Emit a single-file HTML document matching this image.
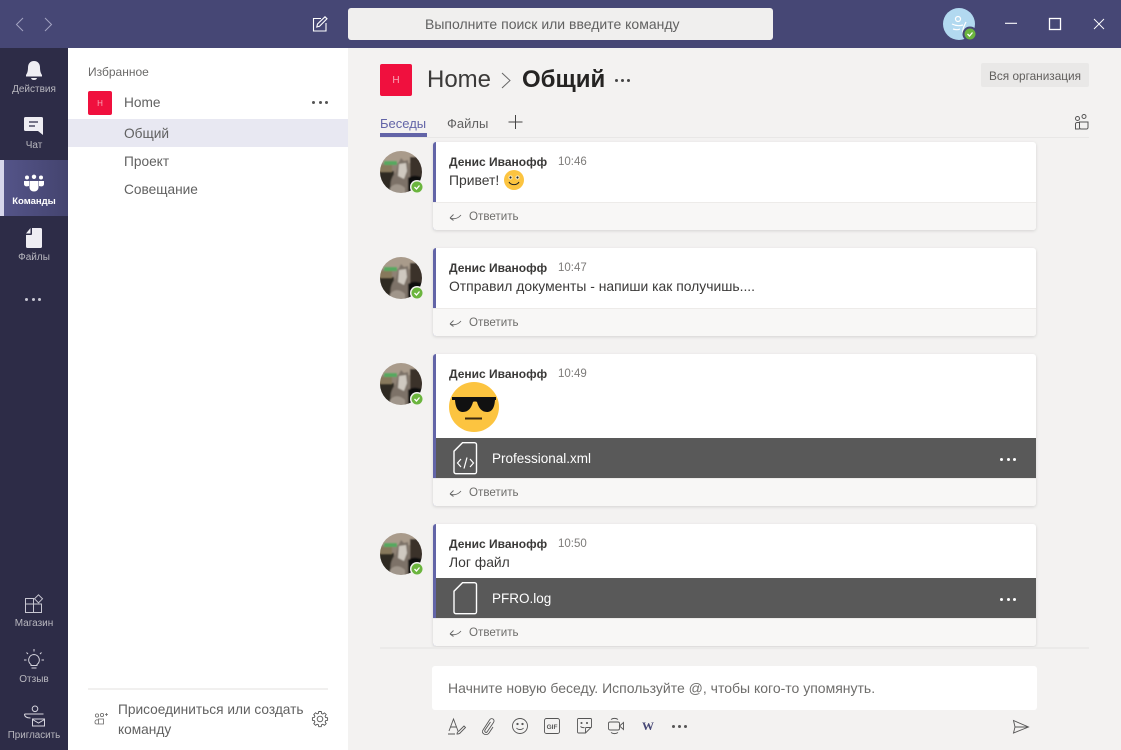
<!DOCTYPE html>
<html lang="ru"><head><meta charset="utf-8"><title>Teams</title>
<style>
*{box-sizing:border-box}
html,body{margin:0;padding:0}
body{width:1121px;height:750px;overflow:hidden;position:relative;background:#f3f2f1;font-family:"Liberation Sans","Noto Sans CJK SC",sans-serif;color:#252423}
.a{position:absolute;white-space:nowrap}
svg{position:absolute;display:block;overflow:visible}
#top{left:0;top:0;width:1121px;height:48px;background:#464775}
#rail{left:0;top:48px;width:68px;height:702px;background:#2d2c47}
#side{left:68px;top:48px;width:280px;height:702px;background:#fff}
.rl{width:68px;left:0;text-align:center;font-size:10px;color:#b9b8bf;line-height:12px}
.ch{left:124px;font-size:13.7px;color:#616161;line-height:16px}
.card{position:absolute;left:433px;width:603px;background:#fff;border-radius:3px;box-shadow:0 1px 3px rgba(0,0,0,.13);overflow:hidden}
.card .bar{position:absolute;left:0;top:0;bottom:0;width:3px;background:#6264a7}
.name{left:16px;top:12px;font-size:12px;font-weight:bold;color:#3a3938;line-height:16px}
.time{top:12px;font-size:11.5px;color:#7d7b79;line-height:16px}
.msg{left:16px;top:29px;font-size:13.9px;color:#3b3a39;line-height:18px}
.rep{position:absolute;left:0;right:0;bottom:0;height:28px;background:#f8f7f6;border-top:1px solid #edebe9}
.rep span{position:absolute;left:36px;top:6px;font-size:11.6px;line-height:16px;color:#6e6d6b}
.file{position:absolute;left:3px;right:0;height:40px;background:#595959}
.file span{position:absolute;left:56px;top:12px;font-size:13.5px;line-height:18px;color:#fff}
.dots{position:absolute;display:flex;gap:3.5px}
.dots i{display:block;width:3px;height:3px;border-radius:50%;background:currentColor}
</style></head><body>

<div class="a" id="top"></div>
<svg style="left:12px;top:15px" width="50" height="20" fill="none" stroke="#a3a3c2" stroke-width="1"><path d="M11 3 4.500 9.500l6.500 6.500M33 3l6.500 6.500L33 16"/></svg>
<svg style="left:312px;top:16px" width="16" height="16" fill="none" stroke="#fff" stroke-width="1.100"><path d="M9 2.500H1.500v12.500h12.500V7"/><path d="M5.500 8 13 .8l2 2-7.500 7.500-2.700.7z"/></svg>
<div class="a" style="left:348px;top:8px;width:425px;height:32px;background:#f0efee;border-radius:3px;line-height:33px;font-size:14px;padding-left:77px;color:#616161">Выполните поиск или введите команду</div>

<svg style="left:943px;top:8px" width="34" height="34"><circle cx="16" cy="16" r="16" fill="#b2d9f0"/>
<g fill="none" stroke="#fff" stroke-width="1.200"><circle cx="15" cy="11" r="2.500"/><path d="M9 16c4 2 8 2 11 1M10 21c3 1 5 1 7 0"/><path d="M23 14c-2 4-4 8-3 12"/></g>
<circle cx="27" cy="26" r="7.500" fill="#464775"/><circle cx="27" cy="26" r="5.500" fill="#6bb53e"/><path d="M24.500 26l2 2 3-3.500" stroke="#fff" stroke-width="1.300" fill="none"/></svg>
<svg style="left:1005px;top:16px" width="110" height="18" fill="none" stroke="#fff" stroke-width="1.100"><path d="M0 7.300h12"/><rect x="44.500" y="2.500" width="11" height="11" stroke-width="1.300"/><path d="M89 3l10 10M99 3 89 13" stroke-width=".9"/></svg>

<div class="a" id="rail"></div>
<div class="a" style="left:0;top:160px;width:68px;height:56px;background:linear-gradient(90deg,#55558a,#44446f)"></div>
<div class="a" style="left:0;top:160px;width:4px;height:56px;background:#d6d6ec"></div>

<svg style="left:24px;top:60px" width="20" height="22" fill="#eeedf3"><path d="M10 1c-4 0-6 3-6 6.500 0 4-1 6-2 7.500v1.500h16V15c-1-1.500-2-3.500-2-7.500C16 4 14 1 10 1z"/><path d="M7 18h6c-.5 1.500-1.500 2-3 2s-2.500-.5-3-2z"/></svg>
<div class="a rl" style="top:84px">Действия</div>

<svg style="left:24px;top:117px" width="20" height="20"><path d="M1.500 0h16a1.500 1.500 0 0 1 1.500 1.500V18l-5-4H1.500A1.500 1.500 0 0 1 0 12.500v-11A1.500 1.500 0 0 1 1.500 0z" fill="#eeedf3"/><path d="M5 5h9M5 9h6" stroke="#2d2c47" stroke-width="1.200"/></svg>
<div class="a rl" style="top:140px">Чат</div>

<svg style="left:24px;top:175px" width="20" height="17" fill="#fff"><circle cx="3" cy="2.500" r="2"/><circle cx="10" cy="1.800" r="2.200"/><circle cx="17" cy="2.500" r="2"/><path d="M0 6h5v5c-3 1-5 0-5-2zM15 6h5v3c0 2-2 3-5 2z"/><path d="M5.500 6h9v6c0 3-2 4.500-4.500 4.500S5.500 15 5.500 12z"/></svg>
<div class="a rl" style="top:196px;color:#fff;font-weight:bold;font-size:9.5px">Команды</div>

<svg style="left:26px;top:228px" width="16" height="20" fill="#eeedf3"><path d="M6 0h8.500A1.500 1.500 0 0 1 16 1.500v17a1.500 1.500 0 0 1-1.500 1.500h-13A1.500 1.500 0 0 1 0 18.500V7h5a1 1 0 0 0 1-1z"/><path d="M4.500 0v5.500H0z"/></svg>
<div class="a rl" style="top:252px">Файлы</div>

<div class="dots" style="left:25px;top:298px;color:#c9c8d4"><i></i><i></i><i></i></div>

<svg style="left:25px;top:594px" width="20" height="20" fill="none" stroke="#c8c7d2" stroke-width="1"><path d="M9 4.500H.5v14H16.500V10H.5M8.500 4.500v14"/><path d="M13.500.8l4 4-4 4-4-4z"/></svg>
<div class="a rl" style="top:618px">Магазин</div>

<svg style="left:24px;top:649px" width="20" height="21" fill="none" stroke="#d6d5de" stroke-width="1"><path d="M10 5.500a5.500 5.500 0 0 0-3 10v1h6v-1a5.500 5.500 0 0 0-3-10zM7.500 19h5M10 0v2.500M2.500 3.500l1.500 1.500M17.500 3.500 16 5M0 11h2.500M17.500 11H20"/></svg>
<div class="a rl" style="top:674px">Отзыв</div>

<svg style="left:24px;top:706px" width="21" height="22" fill="none" stroke="#d6d5de" stroke-width="1"><circle cx="11" cy="2.800" r="2.800"/><path d="M.5 8h19M.5 8c0 2.500 2 4 6 4"/><rect x="8.500" y="13" width="12" height="7" fill="#2d2c47"/><path d="M8.500 13.500l6 3.500 6-3.500"/></svg>
<div class="a rl" style="top:730px;font-size:9.800px">Пригласить</div>

<div class="a" id="side"></div>
<div class="a" style="left:88px;top:65px;font-size:12px;line-height:15px;color:#6b6a69">Избранное</div>
<div class="a" style="left:88px;top:91px;width:24px;height:24px;background:#f0103e;border-radius:2px;color:#f9a8b8;font-size:8px;line-height:25px;text-align:center">Н</div>
<div class="a ch" style="top:95px">Home</div>
<div class="dots" style="left:312px;top:101px;color:#555"><i></i><i></i><i></i></div>
<div class="a" style="left:68px;top:119px;width:280px;height:28px;background:#e8e8f2"></div>
<div class="a ch" style="top:126px">Общий</div>
<div class="a ch" style="top:154px">Проект</div>
<div class="a ch" style="top:182px">Совещание</div>

<div class="a" style="left:88px;top:688px;width:240px;height:2px;background:#f1f0ef"></div>
<svg style="left:94px;top:712px" width="14" height="13" fill="none" stroke="#6b6a69" stroke-width=".8"><circle cx="3" cy="3.500" r="1.600"/><circle cx="8" cy="3" r="1.600"/><path d="M1 9.500a2 2 0 0 1 3.500-1V12H2.500A1.500 1.500 0 0 1 1 10.500zM4.500 7h5v5h-5z"/><path d="M11 2.500h3M12.500 1v3"/></svg>
<div class="a" style="left:118px;top:700px;font-size:13.700px;line-height:20px;color:#616161;white-space:normal;width:195px">Присоединиться или создать команду</div>
<svg style="left:312px;top:711px" width="16" height="16" fill="none" stroke="#555" stroke-width=".9"><circle cx="8" cy="8" r="2.800"/><path d="M6.800.5h2.400l.4 2 1.200.5 1.700-1.100 1.700 1.700-1.100 1.700.5 1.200 2 .4v2.400l-2 .4-.5 1.200 1.100 1.700-1.700 1.700-1.700-1.100-1.200.5-.4 2H6.800l-.4-2-1.200-.5-1.700 1.100-1.700-1.700 1.100-1.700-.5-1.200-2-.4V6.800l2-.4.500-1.200-1.100-1.700 1.700-1.700 1.700 1.100 1.200-.5z"/></svg>

<div class="a" style="left:380px;top:64px;width:32px;height:32px;background:#f0103e;border-radius:2px;color:#f9a8b8;font-size:10px;line-height:33px;text-align:center">Н</div>
<div class="a" style="left:427px;top:65px;font-size:24px;line-height:30px;color:#3b3a39">Home</div>
<svg style="left:501px;top:72px" width="11" height="17" fill="none" stroke="#666" stroke-width="1"><path d="M1 1l8 7.500L1 16"/></svg>
<div class="a" style="left:522px;top:65px;font-size:24px;line-height:30px;font-weight:bold;color:#252423">Общий</div>
<div class="dots" style="left:615px;top:79px;color:#444;gap:3px"><i></i><i></i><i></i></div>
<div class="a" style="left:981px;top:63px;width:108px;height:24px;background:#e9e8e7;border-radius:2px;font-size:11.800px;line-height:26px;text-align:center;color:#605e5c">Вся организация</div>

<div class="a" style="left:380px;top:115px;font-size:13px;line-height:17px;color:#6264a7">Беседы</div>
<div class="a" style="left:380px;top:133px;width:47px;height:4px;background:#6264a7"></div>
<div class="a" style="left:447px;top:115px;font-size:13px;line-height:17px;color:#616161">Файлы</div>
<svg style="left:508px;top:115px" width="16" height="16" stroke="#444" stroke-width="1"><path d="M7.500 0v14M.5 7h14"/></svg>
<svg style="left:1074px;top:114px" width="16" height="16" fill="none" stroke="#555" stroke-width="1"><circle cx="3.500" cy="4.500" r="2"/><circle cx="10" cy="2.500" r="2"/><path d="M5.500 15H1.500V10a1.500 1.500 0 0 1 1.500-1.500h2.500M5.500 8h8.500v5.500a1.500 1.500 0 0 1-1.500 1.500H7a1.500 1.500 0 0 1-1.500-1.500z"/></svg>
<div class="a" style="left:380px;top:137px;width:709px;height:1px;background:#e8e7e6"></div>

<svg width="0" height="0" style="position:absolute"><defs>
<clipPath id="c"><circle cx="21" cy="21" r="21"/></clipPath>
<filter id="b" x="-10%" y="-10%" width="120%" height="120%"><feGaussianBlur stdDeviation=".8"/></filter>
<g id="av"><g clip-path="url(#c)"><g filter="url(#b)"><rect x="-2" y="-2" width="46" height="46" fill="#8f8274"/>
<rect x="-2" y="-2" width="46" height="14" fill="#a99b8b"/>
<rect x="30" y="6" width="14" height="22" fill="#3a322c"/>
<rect x="-2" y="20" width="16" height="24" fill="#2e2a24"/>
<rect x="4" y="10" width="13" height="4" fill="#55a85f"/>
<rect x="-2" y="14" width="14" height="7" fill="#87795c"/>
<path d="M13 44c-4-8-3-17 3-23l2-8 3-6 3 3 4-1 1 9c1 6-1 11 0 16l-1 10z" fill="#7d7268"/>
<path d="M19 13l7-1 1 8-3 8-6-3z" fill="#cfc9c0"/>
<path d="M10 37c4-5 10-5 15 0v7H10z" fill="#a0968b"/>
<path d="M28 27c4-3 9-3 16 0v17H28z" fill="#0f0f11"/></g></g>
<circle cx="37" cy="36" r="7" fill="#f3f2f1"/><circle cx="37" cy="36" r="5.500" fill="#6bb53e"/><path d="M34.500 36l2 2 3-3.500" stroke="#fff" stroke-width="1.300" fill="none"/></g>
<g id="rp"><path d="M1 8c4 1.500 8 .5 11-3M1 8l3.500-3.500M1 8l3.500 2.500" fill="none" stroke="#666" stroke-width=".9"/></g>
<g id="bi"><path d="M9.500.7h12a2 2 0 0 1 2 2v27a2 2 0 0 1-2 2H3a2 2 0 0 1-2-2V9.200z" fill="none" stroke="#fff" stroke-width="1.400"/></g>
</defs></svg>

<svg style="left:380px;top:151px" width="44" height="44"><use href="#av"/></svg>
<svg style="left:380px;top:257px" width="44" height="44"><use href="#av"/></svg>
<svg style="left:380px;top:363px" width="44" height="44"><use href="#av"/></svg>
<svg style="left:380px;top:533px" width="44" height="44"><use href="#av"/></svg>

<div class="card" style="top:142px;height:88px"><div class="bar"></div>
<div class="a name">Денис Иванофф</div><div class="a time" style="left:125px">10:46</div>
<div class="a msg">Привет!</div>
<svg style="left:71px;top:28px" width="20" height="20"><circle cx="10" cy="10" r="10" fill="#fcc440"/><circle cx="6.500" cy="7.500" r="2" fill="#fff5d0"/><circle cx="13.500" cy="7.500" r="2" fill="#fff5d0"/><circle cx="6.500" cy="7.500" r="1.100" fill="#222"/><circle cx="13.500" cy="7.500" r="1.100" fill="#222"/><path d="M5 12c2 3.500 8 3.500 10 0" fill="none" stroke="#222" stroke-width="1.100"/></svg>
<div class="rep"><svg style="left:16px;top:7px" width="14" height="12"><use href="#rp"/></svg><span>Ответить</span></div></div>

<div class="card" style="top:248px;height:88px"><div class="bar"></div>
<div class="a name">Денис Иванофф</div><div class="a time" style="left:125px">10:47</div>
<div class="a msg">Отправил документы - напиши как получишь....</div>
<div class="rep"><svg style="left:16px;top:7px" width="14" height="12"><use href="#rp"/></svg><span>Ответить</span></div></div>

<div class="card" style="top:354px;height:152px"><div class="bar"></div>
<div class="a name">Денис Иванофф</div><div class="a time" style="left:125px">10:49</div>
<svg style="left:16px;top:28px" width="50" height="50"><circle cx="25" cy="25" r="25" fill="#fcc440"/><path d="M3 15h44v3h-1c-.5 7-2.500 12-8 12-5.500 0-8.500-4.500-10-10-.8-.6-3.200-.6-4 0-1.500 5.500-4.500 10-10 10-5.500 0-7.500-5-8-12H3z" fill="#111"/><path d="M16 36.500h17" stroke="#3b2a10" stroke-width="2"/></svg>
<div class="file" style="top:84px"><svg style="left:17px;top:4px" width="25" height="32"><use href="#bi"/><path d="M8 17l-3.500 4 3.500 4M17 17l3.500 4-3.500 4M14 15.500 11 26.500" fill="none" stroke="#fff" stroke-width="1.200"/></svg><span>Professional.xml</span>
<div class="dots" style="left:564px;top:20px;color:#fff"><i></i><i></i><i></i></div></div>
<div class="rep"><svg style="left:16px;top:7px" width="14" height="12"><use href="#rp"/></svg><span>Ответить</span></div></div>

<div class="card" style="top:524px;height:122px"><div class="bar"></div>
<div class="a name">Денис Иванофф</div><div class="a time" style="left:125px">10:50</div>
<div class="a msg">Лог файл</div>
<div class="file" style="top:54px"><svg style="left:17px;top:4px" width="25" height="32"><use href="#bi"/></svg><span>PFRO.log</span>
<div class="dots" style="left:564px;top:20px;color:#fff"><i></i><i></i><i></i></div></div>
<div class="rep"><svg style="left:16px;top:7px" width="14" height="12"><use href="#rp"/></svg><span>Ответить</span></div></div>

<div class="a" style="left:380px;top:647px;width:709px;height:2px;background:#ebeae9"></div>
<div class="a" style="left:432px;top:666px;width:605px;height:44px;background:#fff;border-radius:3px;font-size:14px;line-height:45px;padding-left:16px;color:#6e6d6b">Начните новую беседу. Используйте @, чтобы кого-то упомянуть.</div>

<svg style="left:448px;top:718px" width="20" height="18" fill="none" stroke="#555" stroke-width=".9"><path d="M1 13 5.500 1 10 13M2.500 9h6M0 16h7"/><path d="M9 16c0-2 1-2.500 2-3l5-5 1.500 1.500-5 5c-.5 1-1.500 1.500-3.500 1.500z"/></svg>
<svg style="left:481px;top:718px" width="15" height="17" fill="none" stroke="#555" stroke-width=".9"><path d="M9.500 4 4 12c-1 2 1 3 2 2l6.500-9.500c2-3-2-5.500-4-2.500L2 12c-2.500 3.500 3.500 6.500 6 3l4-6"/></svg>
<svg style="left:512px;top:718px" width="16" height="16" fill="none" stroke="#555" stroke-width=".9"><circle cx="8" cy="8" r="7.500"/><circle cx="5.500" cy="6" r=".7" fill="#555"/><circle cx="10.500" cy="6" r=".7" fill="#555"/><path d="M4.500 10c1.500 2 5.500 2 7 0"/></svg>
<svg style="left:544px;top:718px" width="16" height="16" fill="none" stroke="#555" stroke-width=".9"><rect x=".5" y=".5" width="15" height="15" rx="2"/><text x="8" y="10.800" text-anchor="middle" font-family="Liberation Sans" font-size="6.500" font-weight="bold" fill="#555" stroke="none">GIF</text></svg>
<svg style="left:577px;top:718px" width="15" height="16" fill="none" stroke="#555" stroke-width=".9"><path d="M1.500.5h12a1 1 0 0 1 1 1V9l-6 6H1.500a1 1 0 0 1-1-1V1.500a1 1 0 0 1 1-1zM8.500 15v-4.500a1 1 0 0 1 1-1h5"/><circle cx="4.500" cy="5" r=".6" fill="#555"/><circle cx="10" cy="5" r=".6" fill="#555"/><path d="M3.500 8.500c1 1 2.500 1.300 4 1"/></svg>
<svg style="left:608px;top:718px" width="17" height="16" fill="none" stroke="#555" stroke-width=".9"><rect x=".5" y="4" width="11" height="8" rx="1.500"/><path d="M11.500 8l4-3.500v7zM3 1.500C5 0 8 0 10 1.500M3 14.500c2 1.500 5 1.500 7 0"/></svg>
<div class="a" style="left:642px;top:719px;font-family:'Liberation Serif',serif;font-weight:bold;font-size:12px;line-height:14px;color:#464775">W</div>
<div class="dots" style="left:672px;top:725px;color:#555;gap:3px"><i></i><i></i><i></i></div>
<svg style="left:1013px;top:720px" width="18" height="15" fill="none" stroke="#555" stroke-width=".9"><path d="M.5.500l15 6.500-15 6 1.500-6zM2 7h13.500"/></svg>
</body></html>
